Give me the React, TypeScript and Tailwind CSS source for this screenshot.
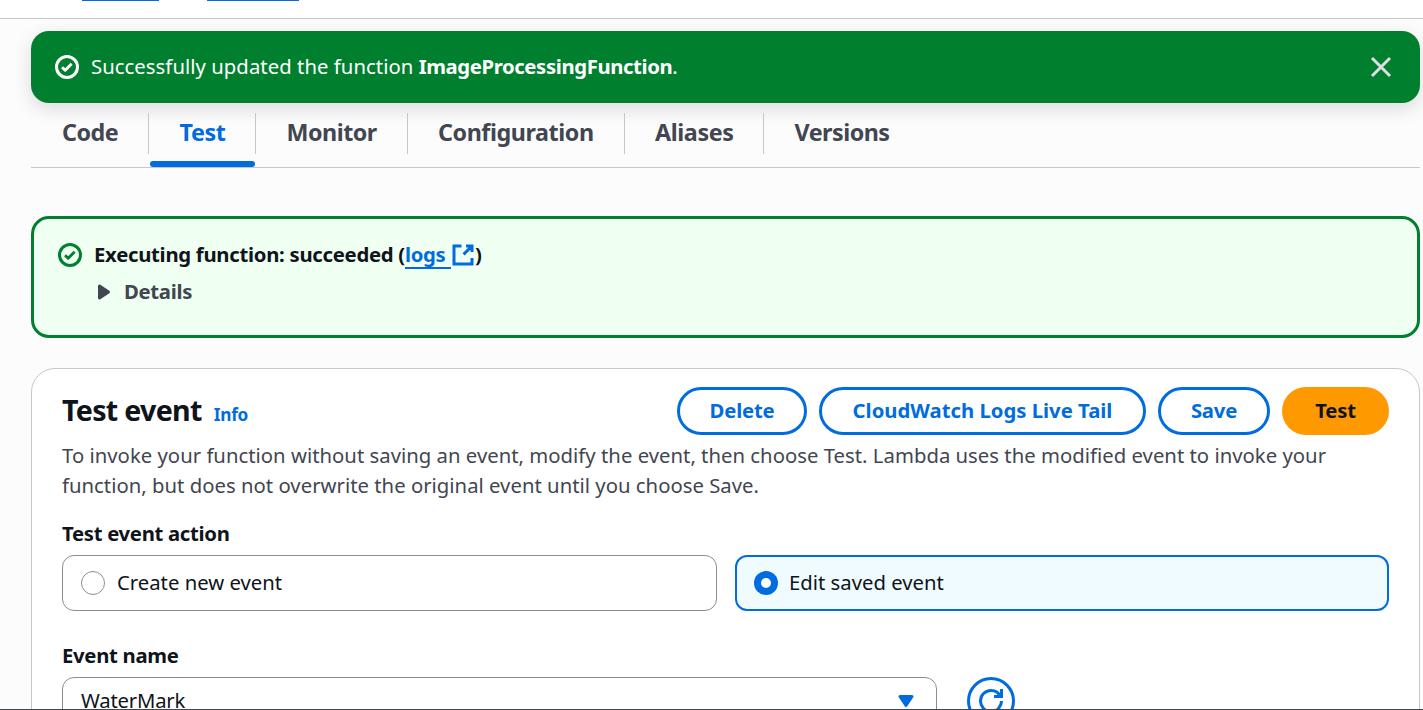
import type { ReactNode } from "react";

function Icon({ children, className = "" }: { children: ReactNode; className?: string }) {
  return (
    <svg viewBox="0 0 16 16" fill="none" stroke="currentColor" strokeWidth="2" className={`size-6 shrink-0 ${className}`}>
      {children}
    </svg>
  );
}

function SuccessIcon({ className = "" }: { className?: string }) {
  return (
    <Icon className={className}>
      <path d="m4.7 8.1 2.1 2.1 4.3-4.4" strokeWidth="1.9" strokeLinejoin="round" />
      <circle cx="8" cy="8" r="7" />
    </Icon>
  );
}

function Caret({ className = "" }: { className?: string }) {
  return (
    <Icon className={className}>
      <path d="M4 5h8l-4 6-4-6z" fill="currentColor" strokeLinejoin="round" />
    </Icon>
  );
}

function Flashbar() {
  return (
    <div className="flex h-[72px] shrink-0 items-center rounded-[18px] bg-[#00802f] px-6 text-white shadow-[0_6px_18px_1px_rgba(0,7,22,0.12)]">
      <SuccessIcon />
      <p className="mb-0.5 ml-3 text-[20.3px] leading-[30px] tracking-[0.05px]">
        Successfully updated the function{" "}
        <b className="font-bold tracking-[-0.38px]">ImageProcessingFunction</b>.
      </p>
      <button className="mr-[3px] ml-auto flex text-[#dedee3]" aria-label="Dismiss">
        <Icon>
          <path d="m2 2 12 12M14 2 2 14" />
        </Icon>
      </button>
    </div>
  );
}

function Tabs() {
  const tab = "flex h-[41px] items-center border-[#c6c6cd]";
  return (
    <div className="flex h-[65px] shrink-0 items-start border-b border-[#c6c6cd] pt-2.5 text-[23.3px] leading-[30px] font-bold tracking-[-0.5px] text-[#424650]">
      <div className={`${tab} w-[118px] border-r pb-1 pl-[31px]`}>Code</div>
      <div className={`${tab} relative w-[107px] border-r pb-1 pl-[30.5px] tracking-[-0.38px] text-[#006ce0]`}>
        Test
        <span className="absolute top-12 left-px h-1.5 w-[105px] rounded-[3px] bg-[#006ce0]" />
      </div>
      <div className={`${tab} w-[152px] border-r pb-1 pl-[30.5px]`}>Monitor</div>
      <div className={`${tab} w-[217px] border-r pb-1 pl-[30px] tracking-[-0.43px]`}>Configuration</div>
      <div className={`${tab} w-[139px] border-r pb-1 pl-[30px] tracking-[-0.4px]`}>Aliases</div>
      <div className={`${tab} pb-1 pl-[30.5px]`}>Versions</div>
    </div>
  );
}

function ResultAlert() {
  return (
    <div className="mt-12 flex h-[122px] shrink-0 rounded-[18px] border-[3px] border-[#00802f] bg-[#effff1] px-6 pt-5 text-[20.3px] leading-[30px] font-bold text-[#0f141a]">
      <SuccessIcon className="mt-1 text-[#00802f]" />
      <div className="ml-3">
        <div className="flex tracking-[-0.27px]">
          <span>Executing function: succeeded (</span>
          <a className="flex text-[#006ce0]">
            <span className="h-[30px] w-[46px] border-b-2 border-[#006ce0] tracking-[-0.3px]">logs</span>
            <Icon className="mt-1">
              <path d="M10 2h4v4M8.4 7.6 14 2M14 10v4H2V2h5" />
            </Icon>
          </a>
          <span>)</span>
        </div>
        <div className="mt-[7px] flex items-center text-[#424650]">
          <Caret className="mt-0.5 mr-2 -ml-[2px] -rotate-90" />
          <span className="tracking-[-0.31px]">Details</span>
        </div>
      </div>
    </div>
  );
}

function Header() {
  const button = "flex h-12 items-center justify-center rounded-full pb-0.5 text-[20.3px] font-bold";
  return (
    <div className="flex h-12 items-center">
      <h2 className="mb-0.5 text-[28.6px] leading-9 font-bold tracking-[-0.7px] text-[#0f141a]">Test event</h2>
      <a className="mt-[7px] ml-3 text-[17.2px] leading-6 font-bold tracking-[-0.2px] text-[#006ce0]">Info</a>
      <div className="ml-auto flex gap-3 text-[#006ce0]">
        <button className={`${button} w-[130px] border-[3px] border-[#006ce0] tracking-[-0.2px]`}>Delete</button>
        <button className={`${button} w-[327px] border-[3px] border-[#006ce0]`}>CloudWatch Logs Live Tail</button>
        <button className={`${button} w-28 border-[3px] border-[#006ce0] tracking-[-0.2px]`}>Save</button>
        <button className={`${button} w-[107px] bg-[#ff9900] tracking-[-0.2px] text-[#0f141a]`}>Test</button>
      </div>
    </div>
  );
}

export default function App() {
  return (
    <div className="flex h-[710px] w-[1423px] flex-col overflow-hidden bg-[#fcfcfd] font-['Noto_Sans',sans-serif] text-[#0f141a]">
      <div className="flex h-[19px] shrink-0 items-start border-b border-[#c6c6cd] bg-white pl-[82px]">
        <span className="h-px w-[77px] bg-[#006ce0]" />
        <span className="ml-[48px] h-px w-[92px] bg-[#006ce0]" />
      </div>

      <main className="flex min-h-0 flex-1 flex-col overflow-hidden pt-3 pr-[3px] pl-[31px]">
        <Flashbar />
        <Tabs />
        <ResultAlert />

        <section className="mt-[30px] h-[600px] shrink-0 rounded-[24px] border border-[#c6c6cd] bg-white px-[30px] pt-[18px] text-[20.3px] leading-[30px]">
          <Header />
          <p className="mt-[5px] whitespace-nowrap tracking-[0.02px] text-[#424650]">
            To invoke your function without saving an event, modify the event, then choose Test. Lambda uses the modified event to invoke your
            <br />
            function, but does not overwrite the original event until you choose Save.
          </p>

          <div className="mt-[18px] font-bold tracking-[-0.3px]">Test event action</div>
          <div className="mt-[7px] flex gap-[18px]">
            <label className="flex h-14 w-[655px] items-center rounded-xl border border-[#8c8c94] pl-[18px]">
              <span className="mr-3 size-6 rounded-full border-[1.5px] border-[#8c8c94]" />
              <span className="mb-0.5">Create new event</span>
            </label>
            <label className="flex h-14 w-[654px] items-center rounded-xl border-[2.5px] border-[#006ce0] bg-[#f0fbff] pl-[17px]">
              <span className="mr-3 flex size-6 items-center justify-center rounded-full bg-[#006ce0]">
                <span className="size-2.5 rounded-full bg-white" />
              </span>
              <span className="mb-0.5 -ml-px">Edit saved event</span>
            </label>
          </div>

          <div className="mt-[29px] font-bold tracking-[-0.3px]">Event name</div>
          <div className="mt-[7px] flex gap-[30px]">
            <div className="flex h-12 w-[875px] items-center justify-between rounded-xl border border-[#8c8c94] pr-[18px] pl-[18px]">
              <span className="mb-0.5 tracking-[-0.2px]">WaterMark</span>
              <Caret className="text-[#006ce0]" />
            </div>
            <button className="flex size-12 items-center justify-center rounded-full border-[3px] border-[#006ce0] text-[#006ce0]" aria-label="Refresh">
              <Icon>
                <path d="M10 5h5V0M15 8a6.957 6.957 0 0 1-7 7 6.957 6.957 0 0 1-7-7 6.957 6.957 0 0 1 7-7 6.87 6.87 0 0 1 6.3 4" />
              </Icon>
            </button>
          </div>
        </section>
      </main>
      <div className="h-px shrink-0 bg-[#424650]" />
    </div>
  );
}
